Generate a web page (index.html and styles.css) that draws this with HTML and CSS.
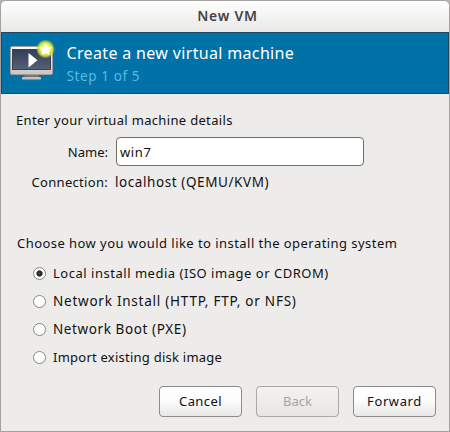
FILE: index.html
```html
<!DOCTYPE html>
<html lang="en">
<head>
<meta charset="utf-8">
<title>New VM</title>
<link rel="stylesheet" href="styles.css">
</head>
<body>
<main class="window">
  <div class="titlebar"><span class="title">New VM</span></div>
  <header class="banner">
    <svg class="vm-icon" width="48" height="44" viewBox="0 0 48 44">
      <defs>
        <linearGradient id="screen" x1="0" y1="0" x2="0" y2="1"><stop offset="0" stop-color="#333f56"/><stop offset="1" stop-color="#566078"/></linearGradient>
        <linearGradient id="frame" x1="0" y1="0" x2="0" y2="1"><stop offset="0" stop-color="#fbfaf8"/><stop offset="1" stop-color="#c9c5c2"/></linearGradient>
        <radialGradient id="glow"><stop offset="0" stop-color="#fdffb8"/><stop offset=".5" stop-color="#eef668"/><stop offset=".75" stop-color="#cbe02c" stop-opacity=".9"/><stop offset="1" stop-color="#a5c83a" stop-opacity="0"/></radialGradient>
      </defs>
      <path d="M16 34h13l1 3H15z" fill="#77777a"/>
      <rect x="13" y="37" width="19" height="3" rx="1" fill="#c5c2c0"/>
      <path d="M13 39.7h19" stroke="#706b6b" stroke-width=".8"/>
      <rect x="1.5" y="6.5" width="42" height="28" rx="1.5" fill="url(#frame)" stroke="#a29e9d"/>
      <rect x="3.5" y="9.5" width="38" height="20" fill="url(#screen)" stroke="#262d3d" stroke-width=".8"/>
      <path d="M19.5 13v14.5l9-7.2z" fill="#fff"/>
      <circle cx="36.5" cy="9" r="9.6" fill="url(#glow)"/>
      <path d="M36.5 3l1.9 3.8 4.3.6-3.1 3 .8 4.5-3.9-2-3.9 2 .8-4.5-3.1-3 4.3-.6z" fill="#fff"/>
    </svg>
    <div class="banner-text">
      <h1 class="heading">Create a new virtual machine</h1>
      <p class="step">Step 1 of 5</p>
    </div>
  </header>
  <section class="details">
    <p class="intro">Enter your virtual machine details</p>
    <div class="fields">
      <span class="label name-label">Name:</span>
      <div class="entry"><span class="entry-text">win7</span></div>
      <span class="label connection-label">Connection:</span>
      <span class="connection">localhost (QEMU/KVM)</span>
    </div>
  </section>
  <section class="install">
    <p class="choose">Choose how you would like to install the operating system</p>
    <div class="options">
      <div class="option"><i class="radio checked"></i><span class="local">Local install media (ISO image or CDROM)</span></div>
      <div class="option"><i class="radio"></i><span class="network">Network Install (HTTP, FTP, or NFS)</span></div>
      <div class="option"><i class="radio"></i><span class="boot">Network Boot (PXE)</span></div>
      <div class="option"><i class="radio"></i><span class="import">Import existing disk image</span></div>
    </div>
  </section>
  <footer class="actions">
    <div class="button"><span class="cancel">Cancel</span></div>
    <div class="button disabled"><span class="back">Back</span></div>
    <div class="button"><span class="forward">Forward</span></div>
  </footer>
</main>
</body>
</html>
```
FILE: styles.css
```css
* { box-sizing: border-box; }
html { background: #b4b3b2; }
body { margin: 0; }
.window {
  width: 450px; height: 432px; display: flex; flex-direction: column;
  border: 1px solid #a3a2a1; border-radius: 6px 6px 0 0;
  background: #edeceb; color: #111; overflow: hidden;
  font: 13px/20px "Noto Sans", "Open Sans", sans-serif; white-space: nowrap;
}
h1, p { margin: 0; font: inherit; }
.titlebar {
  height: 31px; padding-left: 5px; text-align: center; font-size: 14px; font-weight: 600;
  line-height: 30px; letter-spacing: .75px; color: #444;
  background: linear-gradient(#fff, #e9e8e7);
}
.banner {
  height: 62px; display: flex; padding: 7px 8px 0 7px; background: #0072a8; border: 1px solid #1c4a60;
}
.vm-icon { flex: none; }
.banner-text { padding: 2px 0 0 9.5px; }
.heading { font-size: 16px; line-height: 22px; letter-spacing: .34px; color: #fff; }
.step { font-size: 13.5px; line-height: 24px; letter-spacing: .6px; color: #5bb7e6; }
.details { padding: 16px 0 0 14px; }
.intro { padding-left: 1px; letter-spacing: .33px; }
.fields {
  display: grid; grid-template-columns: 93px 248px; column-gap: 8px;
  grid-template-rows: 29px 22px; row-gap: 5px; margin-top: 7px; align-items: center;
}
.label { justify-self: end; }
.connection-label { letter-spacing: .3px; }
.entry {
  height: 29px; padding: 4px 3px; background: #fff; border: 1px solid #6e6e6c; border-radius: 4px;
}
.entry-text { letter-spacing: .6px; }
.connection { margin-left: -1px; font-size: 13.5px; letter-spacing: .58px; }
.install { padding: 40px 0 0 15px; }
.choose { padding-left: 1px; letter-spacing: .45px; }
.options { padding: 6px 0 0 17px; }
.option { height: 28px; display: flex; align-items: center; gap: 7px; }
.local { letter-spacing: .52px; }
.network { font-size: 13.5px; letter-spacing: .76px; }
.boot { font-size: 13.5px; letter-spacing: .6px; }
.import { letter-spacing: .24px; }
.radio {
  width: 13px; height: 13px; border: 1px solid #858583; border-radius: 50%; background: #fff;
}
.checked { background: radial-gradient(circle, #777 0, #292b2b 1px, #292b2b 2.7px, #fff 3.5px); }
.actions { display: flex; gap: 14px; justify-content: flex-end; padding: 15px 13px 0 0; }
.button {
  width: 83px; height: 31px; line-height: 29px; text-align: center;
  border: 1px solid #8c8b8a; border-radius: 4px; background: linear-gradient(#fff, #fdfdfd 45%, #e9e8e7);
}
.cancel { letter-spacing: .4px; }
.forward { letter-spacing: .6px; }
.disabled { border-color: #aaa9a7; color: #a5a5a3; background: linear-gradient(#f3f2f1, #e7e6e5); }
```
